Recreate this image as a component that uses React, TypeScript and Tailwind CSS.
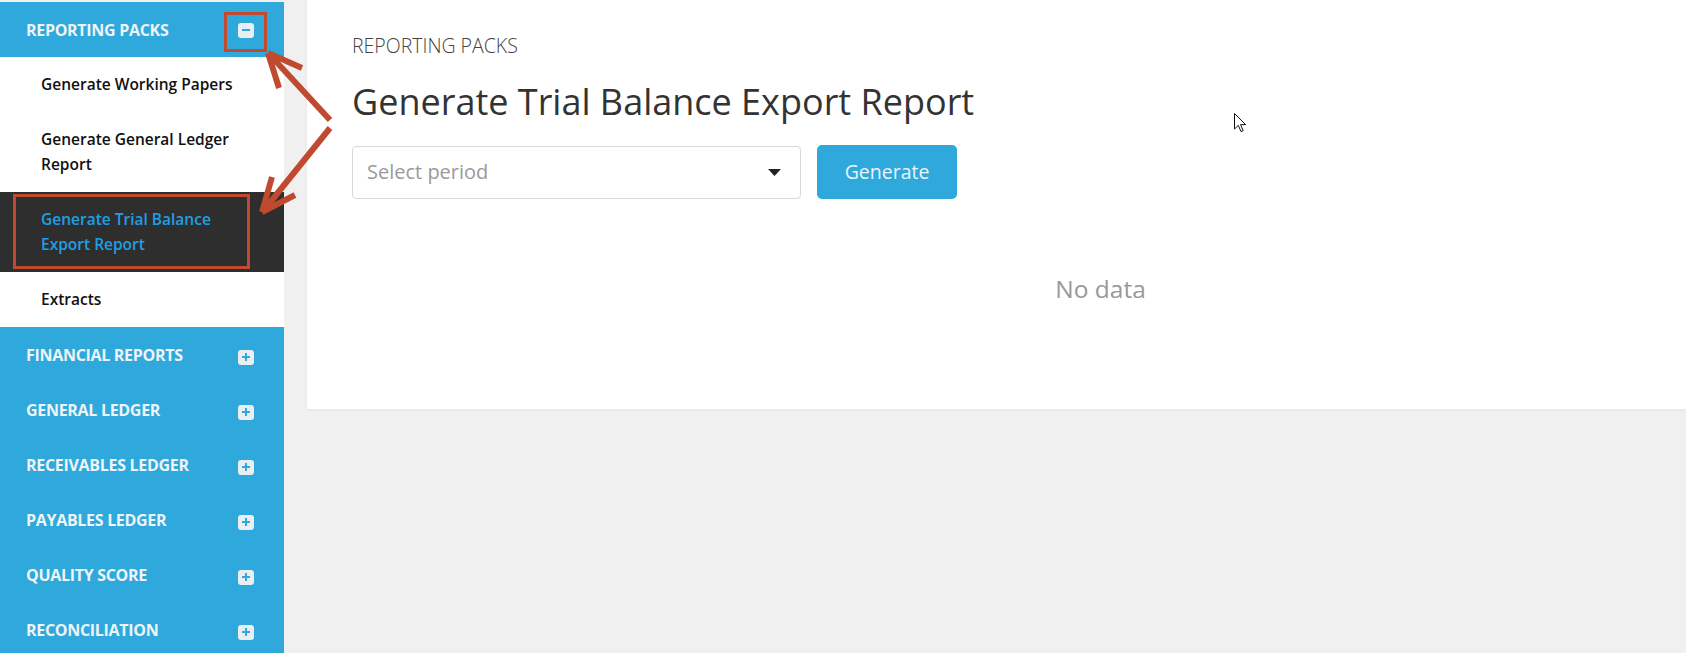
import { useState } from 'react';

const font = { fontFamily: '"Open Sans", "Noto Sans", Arial, sans-serif' };

const sections = [
  'FINANCIAL REPORTS',
  'GENERAL LEDGER',
  'RECEIVABLES LEDGER',
  'PAYABLES LEDGER',
  'QUALITY SCORE',
  'RECONCILIATION',
];

function ToggleIcon({ open }: { open: boolean }) {
  return (
    <span className="flex h-[15px] w-[16px] items-center justify-center rounded-[3px] bg-[#e9eef2]">
      <svg width="10" height="10" viewBox="0 0 10 10">
        <rect x="1" y="4" width="8" height="2" fill="#2fa8dc" />
        {!open && <rect x="4" y="1" width="2" height="8" fill="#2fa8dc" />}
      </svg>
    </span>
  );
}

export default function App() {
  const [period] = useState('');

  return (
    <div className="relative flex h-[653px] overflow-hidden bg-[#f0f0f0]" style={font}>
      {/* sidebar */}
      <aside className="mt-[2px] w-[284px] shrink-0 bg-[#2fa8dc]">
        <div className="relative flex h-[55px] items-center justify-between pl-[26px] pr-[30px] pt-[1px]">
          <span className="text-[16px] font-bold tracking-[-0.3px] text-[#eef4f7]">REPORTING PACKS</span>
          <ToggleIcon open />
          {/* annotation box */}
          <div className="absolute left-[224px] top-[10px] h-[40px] w-[43px] border-[3px] border-[#c04a30]" />
        </div>

        <div className="bg-white text-[15.5px] font-semibold leading-[25px] text-[#111]">
          <div className="py-[15px] pl-[41px]">Generate Working Papers</div>
          <div className="py-[15px] pl-[41px]">
            Generate General Ledger
            <br />
            Report
          </div>
          <div className="relative bg-[#2e2e2e] py-[15px] pl-[41px] text-[#1f9fe3]">
            Generate Trial Balance
            <br />
            Export Report
            <div className="absolute left-[13px] top-[2px] h-[75px] w-[237px] border-[3px] border-[#c04a30]" />
          </div>
          <div className="py-[15px] pl-[41px]">Extracts</div>
        </div>

        {sections.map((s) => (
          <div key={s} className="flex h-[55px] items-center justify-between pl-[26px] pr-[30px] pt-[1px]">
            <span className="text-[16px] font-bold tracking-[-0.3px] text-[#eef4f7]">{s}</span>
            <span className="mt-[4px]">
              <ToggleIcon open={false} />
            </span>
          </div>
        ))}
      </aside>

      {/* main card */}
      <main className="ml-[23px] h-[409px] flex-1 bg-white px-[45px] pt-[33px] shadow-[0_1px_3px_rgba(0,0,0,0.06)]">
        <div className="text-[19.5px] font-light leading-[25px] text-[#444]">REPORTING PACKS</div>
        <h1 className="mt-[23px] text-[36px] font-normal leading-[42px] text-[#333]">
          Generate Trial Balance Export Report
        </h1>

        <div className="mt-[22px] flex items-center gap-[16px]">
          <div className="flex h-[53px] w-[449px] items-center justify-between rounded-[4px] border border-[#d9d9d9] pl-[14px] pr-[19px]">
            <span className="text-[20px] text-[#9a9a9a]">{period || 'Select period'}</span>
            <svg width="13" height="7" viewBox="0 0 13 7">
              <polygon points="0,0 13,0 6.5,7" fill="#222" />
            </svg>
          </div>
          <button className="h-[54px] w-[140px] rounded-[5px] bg-[#2fa8dc] text-[19.5px] text-[#eaf5fb]">
            Generate
          </button>
        </div>

        <div className="mt-[75px] pl-[208px] text-center text-[24.5px] leading-[30px] text-[#999]">No data</div>
      </main>

      {/* annotation arrows */}
      <svg className="pointer-events-none absolute left-0 top-0" width="360" height="240" viewBox="0 0 360 240">
        <g stroke="#c04a30" strokeWidth="6" fill="none" strokeLinecap="butt">
          <line x1="330" y1="120" x2="270" y2="55" />
          <line x1="268" y1="53" x2="302" y2="68" />
          <line x1="268" y1="53" x2="279" y2="88" />
          <line x1="330" y1="128" x2="264" y2="210" />
          <line x1="262" y1="212" x2="272" y2="177" />
          <line x1="262" y1="212" x2="295" y2="195" />
        </g>
      </svg>

      {/* mouse cursor */}
      <svg className="pointer-events-none absolute left-[1234px] top-[113px]" width="13" height="20" viewBox="0 0 13 20">
        <path d="M0.5 0.5 L0.5 16 L4.3 12.4 L7 18.6 L9.2 17.7 L6.6 11.6 L11.6 11.6 Z" fill="#fff" stroke="#111" strokeWidth="1" />
      </svg>
    </div>
  );
}
